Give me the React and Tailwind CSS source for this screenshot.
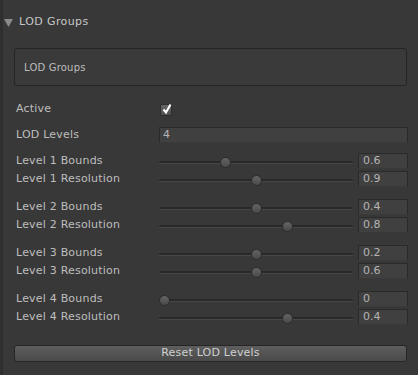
import React from "react";

const font = { fontFamily: '"DejaVu Sans", "Liberation Sans", sans-serif' };

const groups = [
  [
    { label: "Level 1 Bounds", value: "0.6", pos: 66 },
    { label: "Level 1 Resolution", value: "0.9", pos: 97 },
  ],
  [
    { label: "Level 2 Bounds", value: "0.4", pos: 97 },
    { label: "Level 2 Resolution", value: "0.8", pos: 128 },
  ],
  [
    { label: "Level 3 Bounds", value: "0.2", pos: 97 },
    { label: "Level 3 Resolution", value: "0.6", pos: 97 },
  ],
  [
    { label: "Level 4 Bounds", value: "0", pos: 5 },
    { label: "Level 4 Resolution", value: "0.4", pos: 128 },
  ],
];

function SliderRow({ label, value, pos }) {
  return (
    <div className="flex h-[18px] items-center">
      <div className="w-[145px] pl-[2px] text-[11px] text-[#bebebe] tracking-[0.2px]">{label}</div>
      <div className="relative h-[18px] w-[194px]">
        <div className="absolute left-0 right-0 top-[9px] h-[2px] rounded-full bg-[#292929]" />
        <div className="absolute left-0 right-0 top-[11px] h-[1px] bg-[#474747]" />
        <div
          className="absolute top-[5px] h-[11px] w-[11px] rounded-full border border-[#2c2c2c] bg-gradient-to-b from-[#646464] to-[#4a4a4a]"
          style={{ left: pos - 5 }}
        />
      </div>
      <div className="ml-[5px] flex h-[16px] w-[50px] items-center border border-[#2a2a2a] border-b-[#3a3a3a] bg-[#404040] pl-[4px] text-[11px] text-[#b4b4b4]">
        {value}
      </div>
    </div>
  );
}

export default function App() {
  return (
    <div className="flex h-[375px] w-[418px] bg-[#383838]" style={font}>
      <div className="w-[3px] bg-[#2f2f2f]" />
      <div className="flex flex-1 flex-col">
        <div className="mt-[12px] flex h-[20px] items-center">
          <svg width="9" height="8" viewBox="0 0 9 8" className="ml-[1px] mt-[1px]">
            <polygon points="0,0 9,0 4.5,8" fill="#8a8a8a" />
          </svg>
          <span className="ml-[6px] text-[11px] text-[#c6c6c6] tracking-[0.4px]">LOD Groups</span>
        </div>
        <div className="ml-[11px] mr-[11px] mt-[16px] flex h-[38px] items-center rounded-[3px] border border-[#242424] bg-[#3a3a3a] pl-[9px] text-[10px] text-[#bdbdbd] tracking-[0.2px]">
          LOD Groups
        </div>
        <div className="ml-[11px] mr-[10px] mt-[14px] flex flex-col">
          <div className="flex h-[18px] items-center">
            <div className="w-[145px] pl-[2px] text-[11px] text-[#bebebe] tracking-[0.2px]">Active</div>
            <div className="relative mt-[2px] ml-[1px] h-[12px] w-[12px] rounded-[2px] border border-[#2e2e2e] bg-gradient-to-b from-[#666666] to-[#4e4e4e]">
              <svg width="12" height="13" viewBox="0 0 12 13" className="absolute left-[0px] top-[-3px]">
                <path d="M2.5 7.5 L5 10.5 L9.5 2.5" stroke="#ffffff" strokeWidth="2.1" fill="none" />
              </svg>
            </div>
          </div>
          <div className="mt-[8px] flex h-[18px] items-center">
            <div className="w-[145px] pl-[2px] text-[11px] text-[#bebebe] tracking-[0.2px]">LOD Levels</div>
            <div className="flex h-[16px] flex-1 items-center border border-[#2a2a2a] border-b-[#3a3a3a] bg-[#404040] pl-[3px] text-[11px] text-[#b4b4b4]">
              4
            </div>
          </div>
          {groups.map((g, i) => (
            <div key={i} className={i === 0 ? "mt-[8px] flex flex-col" : "mt-[10px] flex flex-col"}>
              {g.map((r) => (
                <SliderRow key={r.label} {...r} />
              ))}
            </div>
          ))}
        </div>
        <div className="ml-[11px] mr-[11px] mt-[19px] flex h-[17px] items-center justify-center rounded-[3px] border border-[#262626] bg-gradient-to-b from-[#5e5e5e] to-[#4a4a4a] text-[11px] text-[#d0d0d0] tracking-[0.2px]">
          Reset LOD Levels
        </div>
      </div>
    </div>
  );
}
